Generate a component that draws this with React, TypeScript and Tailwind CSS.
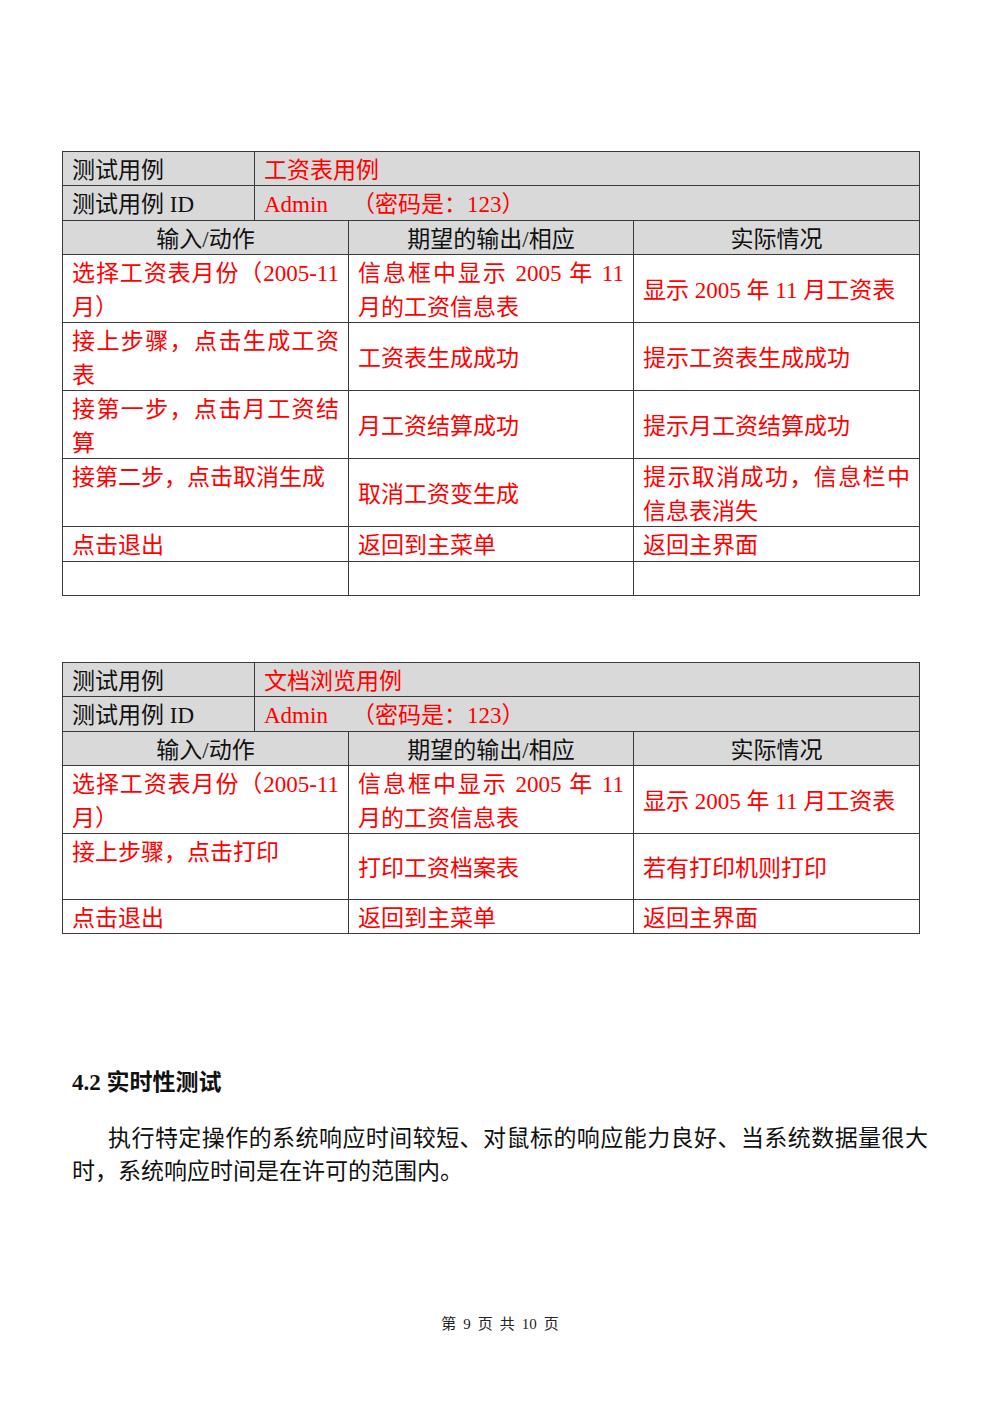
import React from "react";

type CellProps = {
  w: string;
  lines: string[];
  red?: boolean;
  valign?: "top" | "center";
  center?: boolean;
  gray?: boolean;
  justify?: boolean;
};

function Cell({ w, lines, red, valign = "top", center, gray, justify = true }: CellProps) {
  return (
    <div
      className={`${w} h-full border-r border-b border-[#3a3a3a] pl-[9px] pr-[9px] flex flex-col ${
        valign === "center" ? "justify-center pt-[4px]" : "justify-start pt-[2px]"
      } ${gray ? "bg-[#d9d9d9]" : "bg-white"} ${red ? "text-[#ff0000]" : "text-[#111111]"} ${
        center ? "items-center" : ""
      }`}
    >
      {lines.map((l, i) => (
        <div
          key={i}
          className={`leading-[34px] whitespace-nowrap ${
            justify && lines.length > 1 && i < lines.length - 1 ? "text-justify [text-align-last:justify] w-full" : ""
          }`}
        >
          {l}
        </div>
      ))}
    </div>
  );
}

type Row = { h: string; cells: [string[], string[], string[]]; mid?: boolean };

function TestTable({ name, rows }: { name: string; rows: Row[] }) {
  return (
    <div className="w-[858px] border-t border-l border-[#3a3a3a]">
      <div className="flex h-[34px]">
        <Cell w="w-[192px]" lines={["测试用例"]} gray />
        <Cell w="w-[665px]" lines={[name]} gray red />
      </div>
      <div className="flex h-[35px]">
        <Cell w="w-[192px]" lines={["测试用例 ID"]} gray />
        <div className="w-[665px] h-full border-r border-b border-[#3a3a3a] bg-[#d9d9d9] pl-[9px] pt-[2px] leading-[34px] text-[#ff0000] whitespace-nowrap">
          Admin<span className="ml-[24px]">（密码是：123）</span>
        </div>
      </div>
      <div className="flex h-[34px]">
        <Cell w="w-[286px]" lines={["输入/动作"]} gray center />
        <Cell w="w-[285px]" lines={["期望的输出/相应"]} gray center />
        <Cell w="w-[286px]" lines={["实际情况"]} gray center />
      </div>
      {rows.map((r, i) => (
        <div key={i} className={`flex ${r.h}`}>
          <Cell w="w-[286px]" lines={r.cells[0]} red valign="top" />
          <Cell w="w-[285px]" lines={r.cells[1]} red valign={r.mid ? "center" : "top"} />
          <Cell w="w-[286px]" lines={r.cells[2]} red valign={r.mid ? "center" : "top"} />
        </div>
      ))}
    </div>
  );
}

const rows1: Row[] = [
  { h: "h-[68px]", mid: true, cells: [["选择工资表月份（2005-11", "月）"], ["信息框中显示 2005 年 11", "月的工资信息表"], ["显示 2005 年 11 月工资表"]] },
  { h: "h-[68px]", mid: true, cells: [["接上步骤，点击生成工资", "表"], ["工资表生成成功"], ["提示工资表生成成功"]] },
  { h: "h-[68px]", mid: true, cells: [["接第一步，点击月工资结", "算"], ["月工资结算成功"], ["提示月工资结算成功"]] },
  { h: "h-[68px]", mid: true, cells: [["接第二步，点击取消生成"], ["取消工资变生成"], ["提示取消成功，信息栏中", "信息表消失"]] },
  { h: "h-[35px]", cells: [["点击退出"], ["返回到主菜单"], ["返回主界面"]] },
  { h: "h-[34px]", cells: [[], [], []] },
];

const rows2: Row[] = [
  { h: "h-[68px]", mid: true, cells: [["选择工资表月份（2005-11", "月）"], ["信息框中显示 2005 年 11", "月的工资信息表"], ["显示 2005 年 11 月工资表"]] },
  { h: "h-[66px]", mid: true, cells: [["接上步骤，点击打印"], ["打印工资档案表"], ["若有打印机则打印"]] },
  { h: "h-[34px]", cells: [["点击退出"], ["返回到主菜单"], ["返回主界面"]] },
];

export default function App() {
  return (
    <div className="w-[1000px] h-[1415px] bg-white font-['Liberation_Serif','Noto_Sans_CJK_SC',serif] text-[23px] text-[#111111]">
      <div className="pt-[151px] pl-[62px]">
        <TestTable name="工资表用例" rows={rows1} />
        <div className="h-[66px]" />
        <TestTable name="文档浏览用例" rows={rows2} />
      </div>
      <div className="pl-[72px] w-[928px] mt-[132px]">
        <div className="leading-[34px] font-bold">4.2 实时性测试</div>
        <div className="mt-[22px] leading-[33px]">
          <div className="pl-[36px] text-justify [text-align-last:justify] whitespace-nowrap">
            执行特定操作的系统响应时间较短、对鼠标的响应能力良好、当系统数据量很大
          </div>
          <div>时，系统响应时间是在许可的范围内。</div>
        </div>
      </div>
      <div className="mt-[126px] flex justify-center gap-[7px] text-[15px] leading-[20px] text-[#222222]">
        <span>第</span>
        <span>9</span>
        <span>页</span>
        <span>共</span>
        <span>10</span>
        <span>页</span>
      </div>
    </div>
  );
}
